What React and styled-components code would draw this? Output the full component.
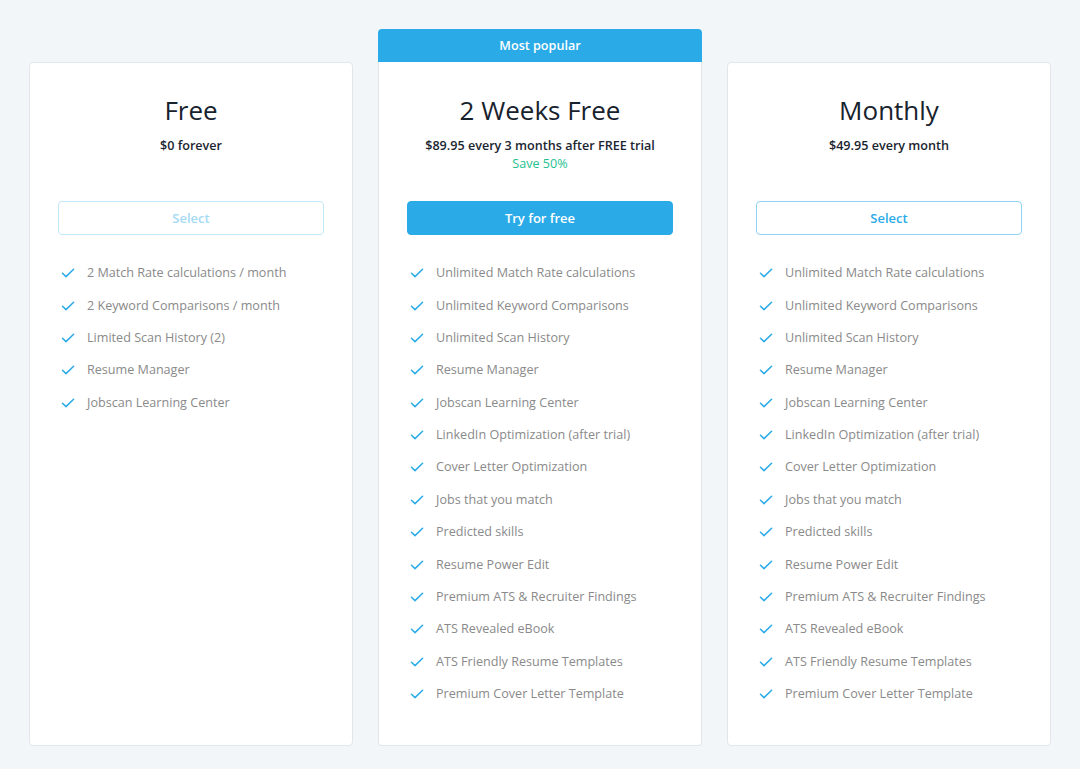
import React from "react";
import styled, { createGlobalStyle } from "styled-components";

const GlobalStyle = createGlobalStyle`
  body {
    margin: 0;
    background: #f3f6f9;
    font-family: "Open Sans", "Noto Sans", sans-serif;
  }
`;

const common = [
  "Resume Manager",
  "Jobscan Learning Center",
];

const premium = [
  "Unlimited Match Rate calculations",
  "Unlimited Keyword Comparisons",
  "Unlimited Scan History",
  ...common,
  "LinkedIn Optimization (after trial)",
  "Cover Letter Optimization",
  "Jobs that you match",
  "Predicted skills",
  "Resume Power Edit",
  "Premium ATS & Recruiter Findings",
  "ATS Revealed eBook",
  "ATS Friendly Resume Templates",
  "Premium Cover Letter Template",
];

const plans = [
  {
    title: "Free",
    price: "$0 forever",
    button: "Select",
    variant: "disabled",
    features: [
      "2 Match Rate calculations / month",
      "2 Keyword Comparisons / month",
      "Limited Scan History (2)",
      ...common,
    ],
  },
  {
    title: "2 Weeks Free",
    price: "$89.95 every 3 months after FREE trial",
    save: "Save 50%",
    button: "Try for free",
    variant: "primary",
    popular: true,
    features: premium,
  },
  {
    title: "Monthly",
    price: "$49.95 every month",
    button: "Select",
    variant: "outline",
    features: premium,
  },
];

const Check = () => (
  <svg width="14" height="10" viewBox="0 0 14 10" fill="none">
    <path
      d="M1.5 5.2 L5 8.6 L12.6 1.2"
      stroke="#2aabe8"
      strokeWidth="1.5"
      strokeLinecap="round"
      strokeLinejoin="round"
    />
  </svg>
);

const App = () => {
  return (
    <>
      <GlobalStyle />
      <Page>
        {plans.map((plan) => (
          <Column key={plan.title} $popular={plan.popular}>
            {plan.popular && <Banner>Most popular</Banner>}
            <Card $popular={plan.popular}>
              <Title>{plan.title}</Title>
              <PriceBlock>
                <Price>{plan.price}</Price>
                {plan.save && <Save>{plan.save}</Save>}
              </PriceBlock>
              <Button $variant={plan.variant}>{plan.button}</Button>
              <Features>
                {plan.features.map((f) => (
                  <Feature key={f}>
                    <Check />
                    <span>{f}</span>
                  </Feature>
                ))}
              </Features>
            </Card>
          </Column>
        ))}
      </Page>
    </>
  );
};

export default App;

const Page = styled.div`
  display: grid;
  grid-template-columns: repeat(3, 324px);
  column-gap: 25px;
  justify-content: start;
  padding: 29px 0 23px 29px;
`;

const Column = styled.div`
  display: flex;
  flex-direction: column;
  padding-top: ${(p) => (p.$popular ? "0" : "33px")};
`;

const Banner = styled.div`
  height: 33px;
  background: #2aabe8;
  border-radius: 4px 4px 0 0;
  color: #fff;
  font-size: 12.6px;
  font-weight: 600;
  display: flex;
  align-items: center;
  justify-content: center;
`;

const Card = styled.div`
  flex: 1;
  background: #fff;
  border: 1px solid #e1e6ec;
  border-top: ${(p) => (p.$popular ? "none" : "1px solid #e1e6ec")};
  border-radius: ${(p) => (p.$popular ? "0 0 4px 4px" : "4px")};
  padding: ${(p) => (p.$popular ? "32px" : "31px")} 28px 35px;
  display: flex;
  flex-direction: column;
`;

const Title = styled.h2`
  margin: 0;
  font-size: 26px;
  line-height: 32px;
  font-weight: 500;
  color: #17222d;
  text-align: center;
`;

const PriceBlock = styled.div`
  margin-top: 11px;
  min-height: 36px;
  text-align: center;
  font-size: 12.6px;
  line-height: 18px;
  font-weight: 600;
`;

const Price = styled.div`
  color: #1b2631;
`;

const Save = styled.div`
  color: #1fbf8f;
  font-weight: 500;
`;

const Button = styled.button`
  margin-top: 28px;
  height: 34px;
  border-radius: 4px;
  font-family: inherit;
  font-size: 13px;
  font-weight: 600;
  cursor: pointer;
  background: ${(p) => (p.$variant === "primary" ? "#2aabe8" : "#fff")};
  color: ${(p) =>
    p.$variant === "primary"
      ? "#fff"
      : p.$variant === "disabled"
      ? "#a5daf4"
      : "#2aabe8"};
  border: 1px solid
    ${(p) =>
      p.$variant === "primary"
        ? "#2aabe8"
        : p.$variant === "disabled"
        ? "#c4e7f8"
        : "#8fd2f2"};
`;

const Features = styled.ul`
  list-style: none;
  margin: 22px 0 0;
  padding: 0 0 0 3px;
`;

const Feature = styled.li`
  display: flex;
  align-items: center;
  gap: 12px;
  padding: 6.2px 0;
  font-size: 12.6px;
  line-height: 20px;
  color: #8a8a8a;
`;
